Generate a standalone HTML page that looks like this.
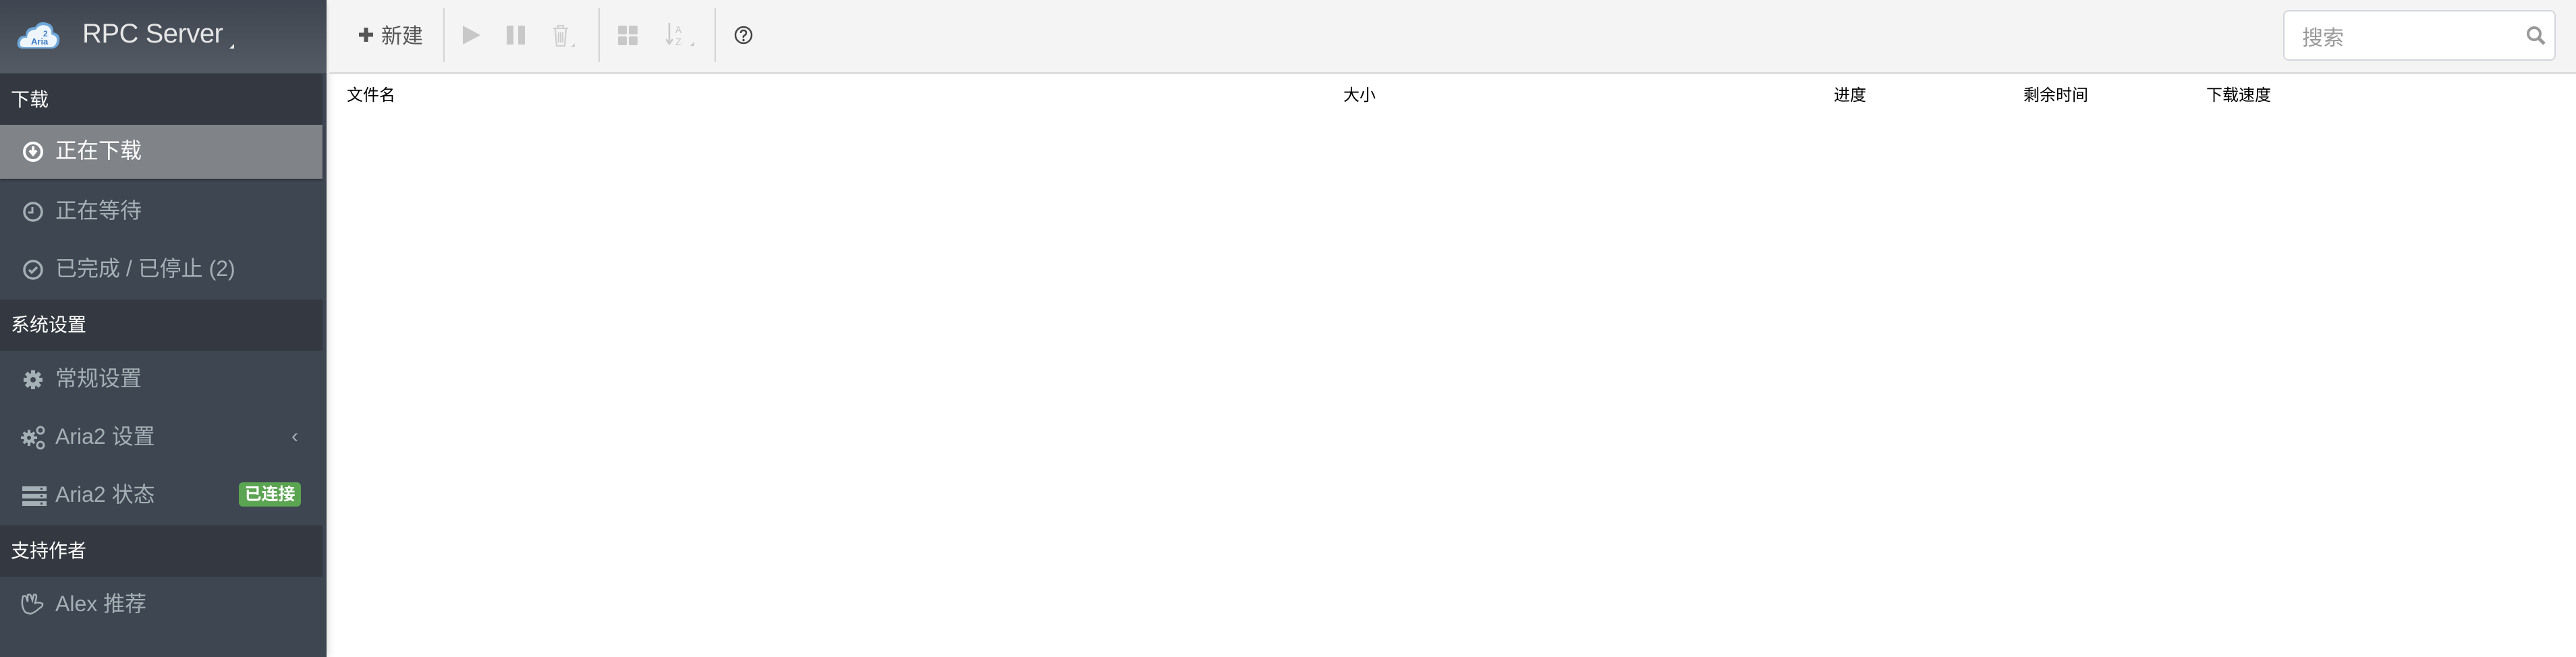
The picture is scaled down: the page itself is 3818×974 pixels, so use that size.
<!DOCTYPE html>
<html><head><meta charset="utf-8"><style>
*{margin:0;padding:0;box-sizing:border-box}
body{width:3818px;height:974px;overflow:hidden;background:#fff;font-family:"Liberation Sans","Noto Sans CJK SC",sans-serif;position:relative}
.sb{position:absolute;left:0;top:0;width:484px;height:974px;background:#3e4651;box-shadow:4px 0 10px rgba(0,0,0,.12)}
.logo{position:absolute;left:0;top:0;width:484px;height:108px;background:linear-gradient(#3e4550,#555b64)}
.logo .t{position:absolute;left:122px;top:28px;font-size:40px;color:#e6e6e6;letter-spacing:-0.5px}
.sec{position:absolute;left:0;width:478px;height:76px;background:#343840;color:#fff;font-size:28px;line-height:76px;padding-left:16px}
.it{position:absolute;left:0;width:478px;height:86px;color:#a3b0b5;font-size:32px;line-height:86px}
.it .tx{position:absolute;left:82px;top:-2px}
.it svg{position:absolute;left:33px;top:27px}
.act{background:#808388;color:#fff;height:80px;line-height:80px;box-shadow:0 2px 3px rgba(0,0,0,.3)}
.act svg{top:24px}
.badge{position:absolute;left:354px;top:23px;width:92px;height:36px;background:#5ba451;border-radius:6px;color:#fff;font-size:25px;font-weight:bold;line-height:36px;text-align:center}
.tb{position:absolute;left:488px;top:0;right:0;height:110px;background:#f4f4f4;border-bottom:3px solid #dcdcdc}
.sep{position:absolute;top:12px;width:2px;height:80px;background:#d4d4d4}
.th{position:absolute;top:121px;font-size:24px;color:#000}
.search{position:absolute;left:3384px;top:15px;width:404px;height:75px;border:2px solid #d2d6dc;border-radius:8px;background:#fff}
.search span{position:absolute;left:26px;top:14px;font-size:31px;color:#9a9a9a}
</style></head><body>
<div class="sb">
 <div class="logo">
  <svg style="position:absolute;left:24px;top:28px" width="68" height="48" viewBox="0 0 68 48"><path d="M10 44 Q0 44 2 34 Q4 24 14 25 Q14 12 28 12 Q34 2 46 6 Q56 9 55 20 Q66 22 64 34 Q62 44 52 44 Z" fill="#6ea6d8"/><path d="M12 42 Q4 42 6 34 Q8 27 16 28 Q17 16 29 16 Q35 7 45 10 Q53 13 52 23 Q62 25 60 34 Q58 42 50 42 Z" fill="#eef5fb"/><text x="22" y="38" font-size="13" font-family="Liberation Sans" fill="#3d7dc4" font-weight="bold">Aria</text><text x="40" y="26" font-size="12" font-family="Liberation Sans" fill="#3d7dc4" font-weight="bold">2</text></svg>
  <div class="t">RPC Server</div>
  <div style="position:absolute;left:340px;top:65px;width:0;height:0;border-left:7px solid transparent;border-bottom:7px solid #e6e6e6"></div>
 </div>
 <div class="sec" style="top:110px">下载</div>
 <div class="it act" style="top:185px"><svg width="32" height="32" viewBox="0 0 32 32"><circle cx="16" cy="16" r="13" fill="none" stroke="#fff" stroke-width="4"/><path d="M16 8v10M11 14l5 6 5-6" stroke="#fff" stroke-width="4" fill="none"/></svg><span class="tx">正在下载</span></div>
 <div class="it" style="top:271px"><svg width="32" height="32" viewBox="0 0 32 32"><circle cx="16" cy="16" r="13" fill="none" stroke="#a3b0b5" stroke-width="3.5"/><path d="M15 9v8h-6" stroke="#a3b0b5" stroke-width="3" fill="none"/></svg><span class="tx">正在等待</span></div>
 <div class="it" style="top:357px"><svg width="32" height="32" viewBox="0 0 32 32"><circle cx="16" cy="16" r="13" fill="none" stroke="#a3b0b5" stroke-width="3.5"/><path d="M10 16l4 4 8-8" stroke="#a3b0b5" stroke-width="3.5" fill="none"/></svg><span class="tx">已完成 / 已停止 (2)</span></div>
 <div class="sec" style="top:444px">系统设置</div>
 <div class="it" style="top:520px"><svg width="32" height="32" viewBox="0 0 32 32"><g stroke="#a3b0b5" stroke-width="6"><path d="M16 2v28M2 16h28M6 6l20 20M26 6L6 26"/></g><circle cx="16" cy="16" r="10" fill="#a3b0b5"/><circle cx="16" cy="16" r="4" fill="#3e4651"/></svg><span class="tx">常规设置</span></div>
 <div class="it" style="top:606px"><svg width="38" height="38" viewBox="0 0 38 38" style="left:30px;top:24px"><g stroke="#a3b0b5" stroke-width="4"><path d="M13 7v24M1 19h24M5 11l16 16M21 11L5 27"/></g><circle cx="13" cy="19" r="8" fill="#a3b0b5"/><circle cx="13" cy="19" r="3" fill="#3e4651"/><circle cx="30" cy="8" r="5" fill="none" stroke="#a3b0b5" stroke-width="3"/><circle cx="30" cy="30" r="5" fill="none" stroke="#a3b0b5" stroke-width="3"/></svg><span class="tx">Aria2 设置</span><span style="position:absolute;left:432px;top:-2px;font-size:30px">‹</span></div>
 <div class="it" style="top:692px"><svg width="36" height="32" viewBox="0 0 36 32"><g fill="#a3b0b5"><rect x="0" y="2" width="36" height="7"/><rect x="0" y="13" width="36" height="7"/><rect x="0" y="24" width="36" height="7"/></g><g fill="#3e4651"><rect x="27" y="4" width="3" height="3"/><rect x="27" y="15" width="3" height="3"/><rect x="27" y="26" width="3" height="3"/></g></svg><span class="tx">Aria2 状态</span><div class="badge">已连接</div></div>
 <div class="sec" style="top:779px">支持作者</div>
 <div class="it" style="top:854px"><svg width="38" height="34" viewBox="0 0 38 34" style="left:30px;top:24px"><path d="M8 30 Q2 24 3 12 L4 6 Q8 4 9 8 L11 14 L11 4 Q15 2 16 6 L18 12 L20 4 Q24 2 24 7 L22 16 Q28 14 33 17 Q34 21 28 24 Q22 30 15 32 Z" fill="none" stroke="#a3b0b5" stroke-width="2.5"/></svg><span class="tx">Alex 推荐</span></div>
</div>
<div class="tb">
 <svg style="position:absolute;left:42px;top:39px" width="25" height="25" viewBox="0 0 25 25"><path d="M12.5 2v21M2 12.5h21" stroke="#555" stroke-width="6"/></svg>
 <span style="position:absolute;left:77px;top:28px;font-size:31px;color:#555">新建</span>
 <div class="sep" style="left:169px"></div>
 <svg style="position:absolute;left:198px;top:38px" width="26" height="28"><path d="M0 0L26 14L0 28Z" fill="#c8c8c8"/></svg>
 <svg style="position:absolute;left:263px;top:38px" width="28" height="28"><rect x="0" y="0" width="10" height="28" fill="#c8c8c8"/><rect x="17" y="0" width="10" height="28" fill="#c8c8c8"/></svg>
 <svg style="position:absolute;left:330px;top:36px" width="36" height="36"><path d="M2 6h22M9 6V2h8v4M5 7l2 25h12l2-25M10 12v15M13 12v15M16 12v15" stroke="#cfcfcf" stroke-width="2.2" fill="none"/><path d="M34 28v6h-6z" fill="#cfcfcf"/></svg>
 <div class="sep" style="left:399px"></div>
 <svg style="position:absolute;left:428px;top:38px" width="30" height="30"><rect x="0" y="0" width="13" height="13" rx="2" fill="#c8c8c8"/><rect x="16" y="0" width="13" height="13" rx="2" fill="#c8c8c8"/><rect x="0" y="16" width="13" height="13" rx="2" fill="#c8c8c8"/><rect x="16" y="16" width="13" height="13" rx="2" fill="#c8c8c8"/></svg>
 <svg style="position:absolute;left:499px;top:34px" width="44" height="36"><path d="M5 0v30M0 24l5 7 5-7" stroke="#c8c8c8" stroke-width="2.5" fill="none"/><text x="14" y="15" font-size="15" fill="#c8c8c8" font-family="Liberation Mono">A</text><text x="14" y="33" font-size="15" fill="#c8c8c8" font-family="Liberation Mono">Z</text><path d="M42 28v6h-6z" fill="#c8c8c8"/></svg>
 <div class="sep" style="left:571px"></div>
 <svg style="position:absolute;left:600px;top:38px" width="28" height="28" viewBox="0 0 28 28"><circle cx="14" cy="14" r="12" fill="none" stroke="#444" stroke-width="2.5"/><path d="M10 11q0-4 4-4t4 4q0 2-2.5 3.5T14 18" fill="none" stroke="#444" stroke-width="2.5"/><circle cx="14" cy="21.5" r="1.7" fill="#444"/></svg>
</div>
<div class="search"><span>搜索</span><svg style="position:absolute;left:358px;top:21px" width="30" height="30" viewBox="0 0 30 30"><circle cx="12" cy="12" r="9" fill="none" stroke="#999" stroke-width="4"/><path d="M19 19l8 8" stroke="#999" stroke-width="5"/></svg></div>
<div class="th" style="left:514px">文件名</div>
<div class="th" style="left:1991px">大小</div>
<div class="th" style="left:2718px">进度</div>
<div class="th" style="left:2999px">剩余时间</div>
<div class="th" style="left:3270px">下载速度</div>
</body></html>
